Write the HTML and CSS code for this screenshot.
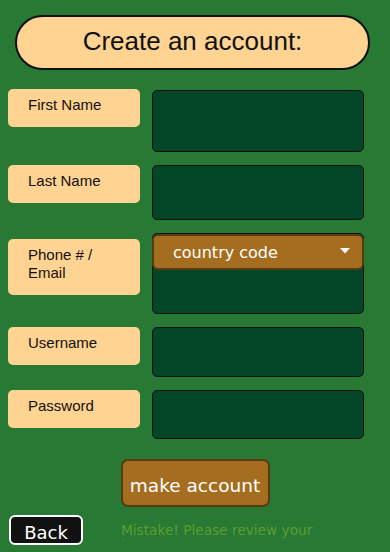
FILE: index.html
```html
<!DOCTYPE html>
<html lang="en">
<head>
  <meta charset="UTF-8" />
  <meta name="viewport" content="width=device-width, initial-scale=1.0" />
  <title>Create an account</title>
  <link rel="stylesheet" href="styles.css">
</head>
<body>

  <header class="title-box">
    <h1>Create an account:</h1>
  </header>

  <main class="signup-form">
    <div class="form-row">
      <div class="field-label">First Name</div>
      <div class="field-input h62"></div>
    </div>
    <div class="form-row">
      <div class="field-label">Last Name</div>
      <div class="field-input h55"></div>
    </div>
    <div class="form-row">
      <div class="field-label two-line">Phone # /<br>Email</div>
      <div class="field-input h80">
        <div class="country-select">
          <span>country code</span>
          <svg width="10" height="6" viewBox="0 0 10 6"><path d="M0 0 L10 0 L5 5.5 Z" fill="#fff"/></svg>
        </div>
      </div>
    </div>
    <div class="form-row">
      <div class="field-label">Username</div>
      <div class="field-input h50"></div>
    </div>
    <div class="form-row">
      <div class="field-label">Password</div>
      <div class="field-input h49"></div>
    </div>

    <div class="submit-wrap">
      <button class="make-btn">make account</button>
    </div>
  </main>

  <footer class="bottom-row">
    <button class="back-btn">Back</button>
    <p class="error-msg">Mistake! Please review your inputs</p>
  </footer>

</body>
</html>
```

FILE: styles.css
```css
/* Reset */
* {
  box-sizing: border-box;
  margin: 0;
  padding: 0;
}

html, body {
  height: 100%;
  overflow: hidden;
}

body {
  background: #277934;
  font-family: "Liberation Sans", Arial, sans-serif;
  color: #111;
}

/* Title */
.title-box {
  margin: 15px 20px 0 15px;
  height: 55px;
  background: #ffd391;
  border: 2px solid #111;
  border-radius: 28px;
  display: flex;
  align-items: center;
  justify-content: center;
}

.title-box h1 {
  font-size: 26px;
  font-weight: normal;
  margin-top: -2px;
}

/* Form */
.signup-form {
  display: flex;
  flex-direction: column;
  gap: 13px;
  padding: 19px 0 0 8px;
}

.form-row {
  display: flex;
  align-items: flex-start;
  gap: 12px;
}

.field-label {
  width: 132px;
  background: #ffd391;
  border-radius: 5px;
  padding: 7px 20px 13px;
  font-size: 15px;
  line-height: 18px;
}

.field-label.two-line {
  margin-top: 6px;
}

.field-input {
  width: 212px;
  background: #034628;
  border: 1px solid #111;
  border-radius: 5px;
}

.h62 { height: 62px; margin-top: 1px; }
.h55 { height: 55px; }
.h80 { height: 81px; }
.h50 { height: 50px; }
.h49 { height: 49px; }

.country-select {
  height: 36px;
  margin: 0 -1px;
  background: #a56d20;
  border: 2px solid #5a3a12;
  border-radius: 6px;
  display: flex;
  align-items: center;
  justify-content: space-between;
  padding: 0 12px 0 19px;
  color: #fff;
  font-family: "DejaVu Sans", Verdana, sans-serif;
  font-size: 16px;
}

.country-select svg {
  margin-top: -2px;
}

/* Submit */
.submit-wrap {
  display: flex;
  justify-content: center;
  padding: 7px 8px 0 0;
}

.make-btn {
  width: 149px;
  height: 48px;
  background: #a56d20;
  border: 2px solid #5a3a12;
  border-radius: 7px;
  color: #fff;
  font-family: "DejaVu Sans", Verdana, sans-serif;
  font-size: 18.5px;
  padding-top: 4px;
}

/* Bottom */
.bottom-row {
  display: flex;
  align-items: flex-start;
  gap: 38px;
  padding: 8px 0 0 9px;
}

.back-btn {
  width: 74px;
  height: 30px;
  background: #111;
  border: 2px solid #fff;
  border-radius: 6px;
  color: #fff;
  font-family: "DejaVu Sans", Verdana, sans-serif;
  font-size: 18px;
  padding-top: 5px;
}

/* the box is short on purpose: the second line only peeks out */
.error-msg {
  width: 220px;
  height: 19px;
  overflow: hidden;
  margin-top: 7px;
  color: #5c9e30;
  font-family: "DejaVu Sans", Verdana, sans-serif;
  font-size: 13.7px;
  line-height: 16px;
}
```
